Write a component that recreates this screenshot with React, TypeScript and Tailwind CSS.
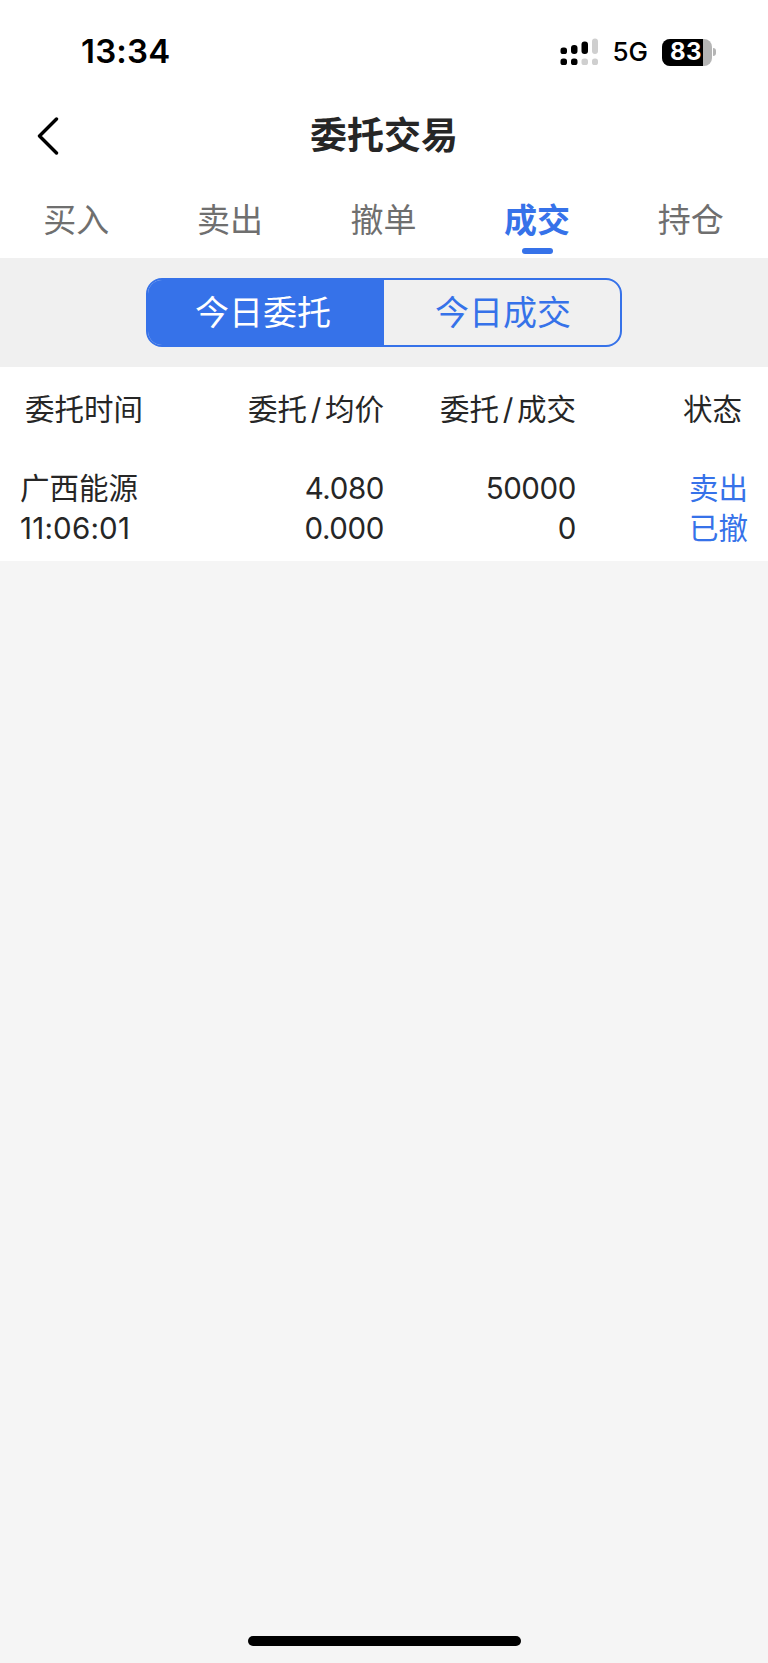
function Segment({ children, active }: { children: string; active?: boolean }) {
  return (
    <div
      className={
        active
          ? "flex w-[236px] items-center justify-center bg-[#3672e9] pr-[6px] text-[34px] text-white"
          : "flex flex-1 items-center justify-center pl-[2px] text-[34px] text-[#3672e9]"
      }
    >
      {children}
    </div>
  );
}

function Tab({ children, active }: { children: string; active?: boolean }) {
  return (
    <div className="flex w-[153.6px] flex-col items-center">
      <div
        className={
          active
            ? "mr-[1px] h-[48px] text-[33px] leading-[48px] font-bold text-[#3672e9]"
            : "mr-[1px] h-[48px] text-[33px] leading-[48px] text-[#6f6f6f]"
        }
      >
        {children}
      </div>
      <div className={active ? "mt-[4px] h-[6px] w-[31px] rounded-full bg-[#3672e9]" : "mt-[4px] h-[6px] w-[31px]"} />
    </div>
  );
}

function Slash({ left, right }: { left: string; right: string }) {
  return (
    <>
      {left}
      <span className="mx-[3.7px]">/</span>
      {right}
    </>
  );
}

export default function App() {
  return (
    <div className="flex h-[1663px] w-[768px] flex-col overflow-hidden bg-[#f5f5f5] font-['Inter','Noto_Sans_CJK_SC',sans-serif] text-[#262626]">
      <div className="bg-white">
        <div className="flex h-[102px] items-start justify-between pt-[31px] pr-[52px] pl-[81px]">
          <div className="text-[33px] leading-[40px] font-semibold tracking-[0.2px] text-black">13:34</div>
          <div className="mt-[6px] flex items-center">
            <svg width="38" height="28" viewBox="0 0 38 28" className="mr-[14px]">
              <rect x="0.5" y="9.5" width="6.5" height="6.5" rx="2.6" fill="#000" />
              <rect x="11" y="7" width="6.5" height="9" rx="3" fill="#000" />
              <rect x="21.5" y="3.5" width="6.5" height="12.5" rx="3" fill="#000" />
              <rect x="32" y="0.5" width="6" height="15.5" rx="3" fill="#cfcfcf" />
              <rect x="0.5" y="20.5" width="6.5" height="6.5" rx="2.6" fill="#000" />
              <rect x="11" y="20.5" width="6.5" height="6.5" rx="2.6" fill="#000" />
              <rect x="21.5" y="20.5" width="6.5" height="6.5" rx="2.6" fill="#cfcfcf" />
              <rect x="32" y="20.5" width="6" height="6.5" rx="2.6" fill="#cfcfcf" />
            </svg>
            <div className="mr-[14px] text-[26px] leading-[30px] font-medium text-black">5G</div>
            <div className="flex h-[27px] w-[50px] items-center overflow-hidden rounded-[8px] bg-[#b5b5b5]">
              <div className="flex h-full w-[41px] items-center justify-center bg-black pl-[7px] text-[24px] font-bold tracking-[0.5px] text-white">83</div>
            </div>
            <div className="ml-[1px] h-[8px] w-[3px] rounded-r-full bg-[#b5b5b5]" />
          </div>
        </div>
        <div className="grid h-[68px] grid-cols-[1fr_auto_1fr] items-center">
          <svg width="22" height="38" viewBox="0 0 22 38" className="ml-[37px]" fill="none">
            <path d="M19.5 2 L2.5 19 L19.5 36" stroke="#000" strokeWidth="3.4" strokeLinecap="round" strokeLinejoin="round" />
          </svg>
          <div className="text-[37px] leading-[50px] font-semibold text-[#262626]">委托交易</div>
          <div />
        </div>
        <div className="flex h-[88px] pt-[26px]">
          <Tab>买入</Tab>
          <Tab>卖出</Tab>
          <Tab>撤单</Tab>
          <Tab active>成交</Tab>
          <Tab>持仓</Tab>
        </div>
      </div>
      <div className="flex h-[109px] items-center justify-center bg-[#f0f0f0]">
        <div className="flex h-[69px] w-[476px] overflow-hidden rounded-[16px] border-2 border-[#3672e9]">
          <Segment active>今日委托</Segment>
          <Segment>今日成交</Segment>
        </div>
      </div>
      <div className="bg-white pb-[13px] text-[29.5px]">
        <div className="flex h-[85px] items-center pr-[26px] pl-[25px]">
          <div className="w-[201px]">委托时间</div>
          <div className="w-[158px] text-right">
            <Slash left="委托" right="均价" />
          </div>
          <div className="w-[192px] text-right">
            <Slash left="委托" right="成交" />
          </div>
          <div className="flex-1 text-right">状态</div>
        </div>
        <div className="mt-[16px] flex pr-[20px] pl-[20px] leading-[40px]">
          <div className="w-[206px]">
            <div>广西能源</div>
            <div className="tracking-[0.2px]">11:06:01</div>
          </div>
          <div className="w-[158px] text-right tracking-[-0.4px]">
            <div>4.080</div>
            <div>0.000</div>
          </div>
          <div className="w-[192px] text-right tracking-[-0.4px]">
            <div>50000</div>
            <div>0</div>
          </div>
          <div className="flex-1 text-right text-[#3672e9]">
            <div>卖出</div>
            <div>已撤</div>
          </div>
        </div>
      </div>
      <div className="flex-1" />
      <div className="mx-auto mb-[17px] h-[10px] w-[273px] rounded-full bg-black" />
    </div>
  );
}
